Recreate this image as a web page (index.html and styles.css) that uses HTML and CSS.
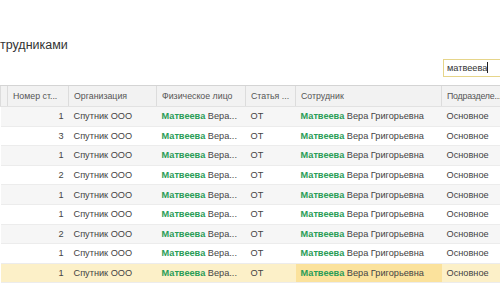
FILE: index.html
```html
<!DOCTYPE html>
<html lang="ru">
<head>
  <meta charset="UTF-8">
  <title>Работа с сотрудниками</title>
  <link rel="stylesheet" href="styles.css">
</head>
<body>

  <h2 class="title">трудниками</h2>

  <div class="search-bar">
    <div class="search">матвеева<span class="caret"></span></div>
  </div>

  <table class="grid">
    <colgroup>
      <col class="c0">
      <col class="c1">
      <col class="c2">
      <col class="c3">
      <col class="c4">
      <col class="c5">
      <col class="c6">
    </colgroup>
    <thead>
      <tr>
        <th></th>
        <th>Номер ст...</th>
        <th>Организация</th>
        <th>Физическое лицо</th>
        <th>Статья ...</th>
        <th>Сотрудник</th>
        <th class="last">Подразделе...</th>
      </tr>
    </thead>
    <tbody id="rows"></tbody>
  </table>

  <script>
    const nums = [1, 3, 1, 2, 1, 1, 2, 1, 1];
    const rows = document.getElementById('rows');
    nums.forEach((n, i) => {
      const sel = i === nums.length - 1 ? ' class="selected"' : '';
      rows.innerHTML += `
        <tr${sel}>
          <td></td>
          <td class="num">${n}</td>
          <td>Спутник ООО</td>
          <td><b>Матвеева</b> Вера...</td>
          <td>ОТ</td>
          <td class="emp"><b>Матвеева</b> Вера Григорьевна</td>
          <td class="last">Основное</td>
        </tr>
      `;
    });
  </script>

</body>
</html>
```

FILE: styles.css
```css
body {
  margin: 0;
  font-family: 'Liberation Sans', Arial, sans-serif;
  background-color: white;
  color: #444;
  overflow: hidden;
}

.title {
  margin: 0;
  padding-top: 38px;
  font-size: 12.5px;
  font-weight: normal;
  color: #333;
  line-height: 15px;
}

.search-bar {
  display: flex;
  justify-content: flex-end;
  margin-top: 6px;
  height: 26px;
}

.search {
  width: 56px;
  height: 16px;
  margin-right: -4px;
  border: 1px solid #e6d58a;
  font-size: 9.2px;
  line-height: 16px;
  padding-left: 3px;
  color: #333;
  white-space: nowrap;
}

.caret {
  display: inline-block;
  width: 1px;
  height: 11px;
  background-color: #222;
  vertical-align: -2px;
}

.grid {
  width: 500px;
  table-layout: fixed;
  border-collapse: collapse;
  font-size: 9.2px;
}

.c0 { width: 7px; }
.c1 { width: 61px; }
.c2 { width: 88px; }
.c3 { width: 89px; }
.c4 { width: 50px; }
.c5 { width: 146px; }
.c6 { width: 59px; }

th {
  height: 20px;
  background-color: #f2f2f2;
  border-top: 1px solid #d4d4d4;
  border-bottom: 1px solid #e2e2e2;
  border-left: 1px solid #dcdcdc;
  font-size: 8.8px;
  font-weight: normal;
  color: #555;
  text-align: left;
  padding: 0 5px;
  white-space: nowrap;
  overflow: hidden;
}

td {
  height: 18.6px;
  padding: 0 5px;
  border-bottom: 1px solid #ececec;
  white-space: nowrap;
  overflow: hidden;
}

th.last,
td.last {
  padding-right: 0;
}

th.last {
  letter-spacing: -0.2px;
}

td b {
  color: #2a9d57;
}

tbody tr:nth-child(odd) {
  background-color: #f6f6f6;
}

td.num {
  text-align: right;
}

tr.selected {
  background-color: #fcf0c8 !important;
}

tr.selected td.emp {
  background-color: #fbe29c;
}
```
